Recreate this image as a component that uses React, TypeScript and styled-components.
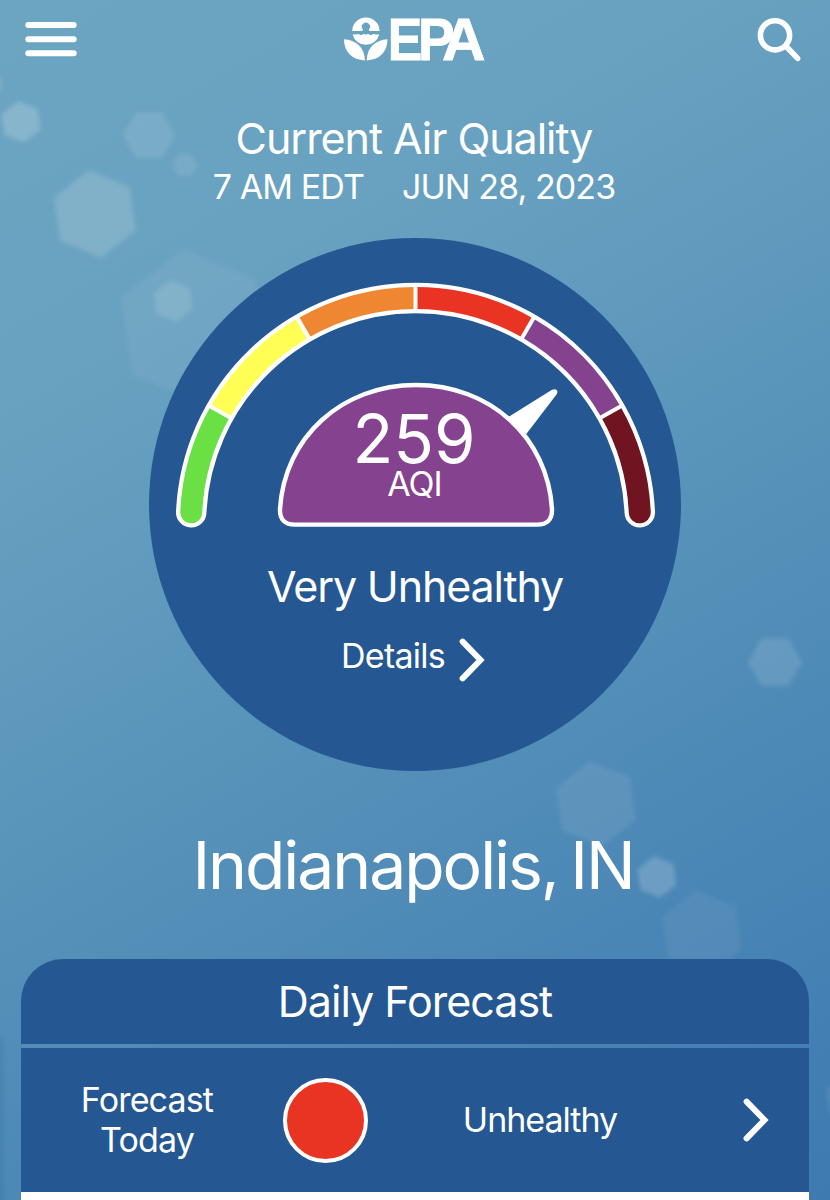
import React from "react";
import styled, { createGlobalStyle } from "styled-components";

const NAVY = "#255893";

const GlobalStyle = createGlobalStyle`
  body { margin: 0; }
  * { box-sizing: border-box; }
`;

const Screen = styled.main`
  position: relative;
  width: 830px;
  height: 1200px;
  overflow: hidden;
  display: flex;
  flex-direction: column;
  align-items: center;
  color: #fff;
  font-family: Inter, "Liberation Sans", sans-serif;
  background: linear-gradient(150deg, #6ca5c1 0%, #69a2c0 24%, #5590b9 58%, #4480b3 88%, #3e7ab0 100%);
`;

const Backdrop = styled.svg`
  position: absolute;
  inset: 0;
`;

const TopBar = styled.header`
  position: relative;
  width: 100%;
  height: 80px;
  padding: 0 29px 0 25px;
  display: grid;
  grid-template-columns: 319px 142px 1fr;
  align-items: start;
`;

const IconButton = styled.button<{ $align: "start" | "end"; $top: number }>`
  justify-self: ${(p) => p.$align};
  margin-top: ${(p) => p.$top}px;
  padding: 0;
  border: 0;
  background: none;
  color: inherit;
  svg { display: block; }
`;

const Logo = styled.svg`
  display: block;
  margin-top: 14px;
  overflow: visible;
`;

const Line = styled.div<{ $size: number; $line: number; $spacing?: number }>`
  font-size: ${(p) => p.$size}px;
  line-height: ${(p) => p.$line}px;
  letter-spacing: ${(p) => p.$spacing ?? 0}px;
  white-space: pre;
`;

const Heading = styled.section`
  position: relative;
  margin: 34px 2px 0 0;
  height: 124px;
  display: flex;
  flex-direction: column;
  align-items: center;
`;

const DateLine = styled(Line)`
  display: flex;
  gap: 38px;
`;

const Dial = styled.section`
  position: relative;
  width: 532px;
  height: 533px;
  border-radius: 50%;
  background: ${NAVY};
  display: flex;
  flex-direction: column;
  align-items: center;
`;

const Gauge = styled.svg`
  display: block;
  width: 532px;
  height: 322px;
  flex: none;
`;

const DetailsLink = styled.div`
  display: flex;
  align-items: center;
  gap: 14px;
  margin: 18px 4px 0 0;
  svg { margin-top: 8px; }
`;

const City = styled(Line)`
  position: relative;
  margin: 54px 4px 0 0;
  word-spacing: -4px;
`;

const Panel = styled.section`
  position: relative;
  width: 788px;
  margin-top: 54px;
  flex: 1;
  display: flex;
  flex-direction: column;
  gap: 4px;
`;

const PanelHeader = styled.h2`
  margin: 0;
  height: 85px;
  border-radius: 42px 42px 0 0;
  background: ${NAVY};
  display: flex;
  justify-content: center;
  font-weight: 400;
`;

const PanelBody = styled.div`
  flex: 1;
  background: #fff;
`;

const ForecastRow = styled.div`
  height: 144px;
  display: grid;
  grid-template-columns: 252px 105px 324px 107px;
  align-items: center;
  justify-items: center;
  text-align: center;
  background: ${NAVY};
`;

const Swatch = styled.span`
  width: 85px;
  height: 85px;
  border: 4px solid #fff;
  border-radius: 50%;
  background: #e93423;
`;

const hexagons = [
  { x: 21, y: 122, r: 21, a: 8, o: 0.19 },
  { x: -8, y: 84, r: 11, a: 20, o: 0.12 },
  { x: 149, y: 135, r: 26, a: 30, o: 0.1 },
  { x: 185, y: 165, r: 12.5, a: 30, o: 0.09 },
  { x: 95, y: 214, r: 44, a: 8, o: 0.15 },
  { x: 194, y: 327, r: 78, a: 8, o: 0.055 },
  { x: 173, y: 301, r: 21, a: 8, o: 0.12 },
  { x: 775, y: 662, r: 27, a: 30, o: 0.12 },
  { x: 596, y: 804, r: 43, a: 8, o: 0.08 },
  { x: 657, y: 877, r: 21, a: 8, o: 0.19 },
  { x: 702, y: 933, r: 43, a: 8, o: 0.055 },
  { x: 848, y: 1098, r: 24, a: 8, o: 0.07 },
];

const hexPoints = (x: number, y: number, r: number, a: number) =>
  Array.from({ length: 6 }, (_, i) => {
    const t = ((i * 60 - 90 - a) * Math.PI) / 180;
    return `${(x + r * Math.cos(t)).toFixed(2)},${(y + r * Math.sin(t)).toFixed(2)}`;
  }).join(" ");

const CX = 266.5;
const CY = 284.5;
const R = 224.5;

const polar = (deg: number, r: number) => {
  const t = (deg * Math.PI) / 180;
  return `${(CX - r * Math.cos(t)).toFixed(2)} ${(CY - r * Math.sin(t)).toFixed(2)}`;
};

const arc = (from: number, to: number) => `M${polar(from, R)} A${R} ${R} 0 0 1 ${polar(to, R)}`;

const START = 2.6;
const segments = [
  { from: START, to: 29.5, color: "#6ae045", cap: true },
  { from: 29.5, to: 60, color: "#fffe54", cap: false },
  { from: 60, to: 90, color: "#ef8632", cap: false },
  { from: 90, to: 120, color: "#e93423", cap: false },
  { from: 120, to: 150.5, color: "#85428f", cap: false },
  { from: 150.5, to: 180 - START, color: "#701422", cap: true },
];

const Chevron = () => (
  <svg width="26" height="44" viewBox="0 0 26 44" fill="none" stroke="#fff" strokeWidth="6" strokeLinecap="round" strokeLinejoin="miter">
    <path d="M3.6 3.6 L21.5 22 L3.6 40.4" />
  </svg>
);

export default function App() {
  return (
    <>
      <GlobalStyle />
      <Screen>
        <Backdrop width="830" height="1200" viewBox="0 0 830 1200">
          <defs>
            <filter id="soft" x="-20%" y="-20%" width="140%" height="140%">
              <feGaussianBlur stdDeviation="2" />
            </filter>
            <filter id="shade" x="-200%" y="-20%" width="500%" height="140%">
              <feGaussianBlur stdDeviation="5" />
            </filter>
          </defs>
          {hexagons.map((h, i) => (
            <polygon key={i} points={hexPoints(h.x, h.y, h.r, h.a)} fill="#fff" opacity={h.o} filter="url(#soft)" />
          ))}
          <rect x="-12" y="1038" width="13" height="180" fill="#255893" opacity="0.3" filter="url(#shade)" />
        </Backdrop>

        <TopBar>
          <IconButton $align="start" $top={22} aria-label="Menu">
            <svg width="52" height="35" viewBox="0 0 52 35" fill="#fff">
              <rect x="0.3" y="0" width="51.4" height="6" rx="3" />
              <rect x="0.3" y="14.2" width="51.4" height="6" rx="3" />
              <rect x="0.3" y="28.3" width="51.4" height="6" rx="3" />
            </svg>
          </IconButton>
          <Logo width="142" height="52" viewBox="344 14 142 52" fill="#fff">
            <path d="M352.2 31 A13.7 13.6 0 0 1 379.6 31 L370.4 31 Q368.2 30.8 368.9 29.6 A4.1 4.1 0 1 0 362.9 29.6 Q363.6 30.8 361.4 31 Z" />
            <path d="M352.6 34.4 Q354.300 34.600 356 34.600 Q358.200 33.200 360 34.800 Q361 35.500 362 34.800 Q364 33.200 365.9 34.800 Q367.800 33.200 369.8 34.800 Q370.8 35.500 371.8 34.800 Q373.6 33.200 375.8 34.600 Q377.500 34.600 379.2 34.4 A13.7 13.7 0 0 1 352.6 34.4 Z" />
            <path d="M344 39.3 C355.5 40 364.7 47 364.9 60.4 C352.5 60 344 52.5 344 39.3 Z" />
            <path d="M387.5 39.3 C376 40 366.900 47 366.7 60.4 C379 60 387.5 52.5 387.5 39.3 Z" />
            <g fontFamily="'Liberation Sans', sans-serif" fontWeight="700" fontSize="60" stroke="#fff" strokeWidth="0.8">
              <text x="387.8" y="60" textLength="34.5" lengthAdjust="spacingAndGlyphs">E</text>
              <text x="418" y="60" textLength="36.500" lengthAdjust="spacingAndGlyphs">P</text>
              <text x="442" y="60" textLength="43.500" lengthAdjust="spacingAndGlyphs">A</text>
            </g>
          </Logo>
          <IconButton $align="end" $top={17} aria-label="Search">
            <svg width="44" height="46" viewBox="757 17 44 46" fill="none" stroke="#fff" strokeWidth="5.6" strokeLinecap="round">
              <circle cx="775" cy="35.3" r="14.6" />
              <path d="M785.8 46 L797.6 58.4" />
            </svg>
          </IconButton>
        </TopBar>

        <Heading>
          <Line $size={43} $line={49} $spacing={-1.05}>Current Air Quality</Line>
          <DateLine $size={34} $line={47} $spacing={-0.9}>
            <span>7 AM EDT</span>
            <span>JUN 28, 2023</span>
          </DateLine>
        </Heading>

        <Dial>
          <Gauge viewBox="0 0 532 322" fill="none">
            <path d={arc(START, 180 - START)} stroke="#fff" strokeWidth="30.500" strokeLinecap="round" />
            {segments.filter((s) => s.cap).map((s) => (
              <path key={s.color} d={arc(s.from, s.to)} stroke={s.color} strokeWidth="22" strokeLinecap="round" />
            ))}
            {segments.filter((s) => !s.cap).map((s) => (
              <path key={s.color} d={arc(s.from, s.to)} stroke={s.color} strokeWidth="22" />
            ))}
            {[29.5, 60, 90, 120, 150.5].map((d) => (
              <path key={d} d={`M${polar(d, R - 13)} L${polar(d, R + 13)}`} stroke="#fff" strokeWidth="4" />
            ))}
            <path d="M358.5 179.500 L403 151.800 Q406.500 150.200 408 152.500 Q409 154.500 407.500 156.500 L375 199 Z" fill="#fff" />
            <path
              d="M131 271 C135.5 199 193 147 267 147 C341 147 398.5 199 403 271 Q403.5 286.6 388 286.6 L146 286.6 Q130.500 286.6 131 271 Z"
              fill="#85428f"
              stroke="#fff"
              strokeWidth="4.400"
            />
            <g fill="#fff" textAnchor="middle" fontFamily="Inter, sans-serif">
              <text x="265" y="225" fontSize="67">259</text>
              <text x="265.500" y="257.500" fontSize="34" letterSpacing="-0.9">AQI</text>
            </g>
          </Gauge>
          <Line $size={43} $line={52} $spacing={-1.15}>Very Unhealthy</Line>
          <DetailsLink>
            <Line $size={34} $line={44} $spacing={-0.75}>Details</Line>
            <Chevron />
          </DetailsLink>
        </Dial>

        <City $size={66} $line={80} $spacing={-2.05}>Indianapolis, IN</City>

        <Panel>
          <PanelHeader>
            <Line as="span" $size={43} $line={84} $spacing={-1}>Daily Forecast</Line>
          </PanelHeader>
          <PanelBody>
            <ForecastRow>
              <Line $size={34} $line={40} $spacing={-0.85}>{"Forecast\nToday"}</Line>
              <Swatch />
              <Line $size={34} $line={40} $spacing={-1}>Unhealthy</Line>
              <Chevron />
            </ForecastRow>
          </PanelBody>
        </Panel>
      </Screen>
    </>
  );
}
